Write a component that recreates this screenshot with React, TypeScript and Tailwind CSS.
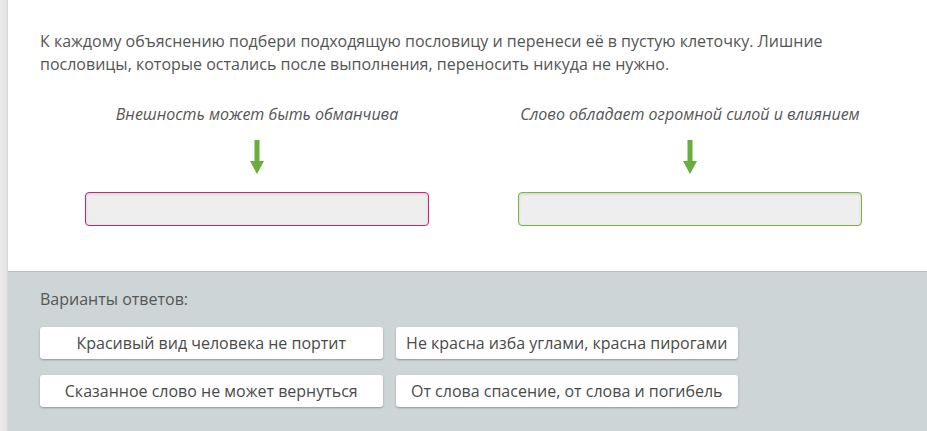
export default function App() {
  const options = [
    "Красивый вид человека не портит",
    "Не красна изба углами, красна пирогами",
    "Сказанное слово не может вернуться",
    "От слова спасение, от слова и погибель",
  ];

  return (
    <div className="flex min-h-[431px] w-[927px] bg-white font-['Open_Sans',sans-serif]">
      {/* left rail */}
      <div className="w-[8px] shrink-0 border-r border-[#d6d6d6] bg-gradient-to-r from-[#ececec] to-[#e2e2e2]" />

      <div className="flex flex-1 flex-col">
        <div className="px-8 pt-[30px] pb-[45px]">
          <p className="text-[16px] leading-[23px] text-[#555]">
            К каждому объяснению подбери подходящую пословицу и перенеси её в пустую клеточку. Лишние
            пословицы, которые остались после выполнения, переносить никуда не нужно.
          </p>

          <div className="mt-[27px] ml-[45px] grid grid-cols-[344px_344px] gap-x-[89px]">
            {[
              { label: "Внешность может быть обманчива", border: "border-[#c2277c]" },
              { label: "Слово обладает огромной силой и влиянием", border: "border-[#7cb342]" },
            ].map((c) => (
              <div key={c.label} className="flex flex-col items-center">
                <div className="h-[22px] whitespace-nowrap text-[16px] italic leading-[22px] text-[#555]">
                  {c.label}
                </div>
                <svg className="mt-[15px]" width="16" height="35" viewBox="0 0 16 35">
                  <rect x="5.5" y="0" width="5" height="22" fill="#69ad3c" />
                  <path d="M1 21 L15 21 L8 34 Z" fill="#69ad3c" />
                </svg>
                <div
                  className={`mt-[17px] h-[34px] w-full rounded-[4px] border ${c.border} bg-[#eeeeee] shadow-[inset_0_1px_3px_rgba(0,0,0,0.12)]`}
                />
              </div>
            ))}
          </div>
        </div>

        <div className="flex-1 border-t border-[#b9c2c3] bg-[#cdd5d6] px-8 pt-[17px] pb-[24px]">
          <div className="text-[16px] leading-[20px] text-[#555]">Варианты ответов:</div>
          <div className="mt-[18px] grid w-[698px] grid-cols-2 gap-x-[13px] gap-y-[16px]">
            {options.map((o) => (
              <div
                key={o}
                className="flex h-[32px] items-center justify-center rounded-[3px] bg-white text-[16px] text-[#4a4a4a] shadow-[0_1px_2px_rgba(0,0,0,0.3)]"
              >
                {o}
              </div>
            ))}
          </div>
        </div>
      </div>
    </div>
  );
}
